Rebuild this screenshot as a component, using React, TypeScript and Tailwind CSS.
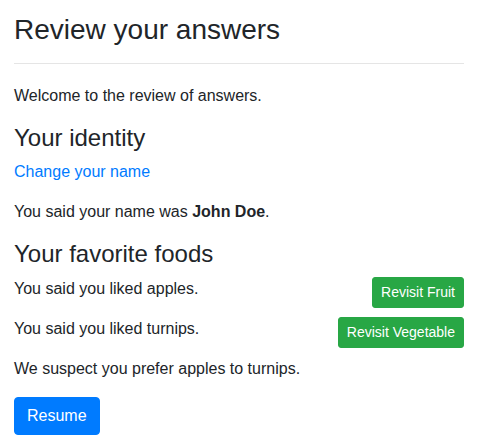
import React from 'react';

const font = { fontFamily: '"Liberation Sans", Arial, sans-serif' };

const App: React.FC = () => {
  return (
    <div className="px-[14px] pt-[13px] text-base leading-6 text-[#212529] bg-white" style={font}>
      <h3 className="text-[28px] leading-[1.2] font-normal">Review your answers</h3>
      <hr className="mt-4 mb-5 border-0 border-t border-black/10" />

      <p className="mb-4">Welcome to the review of answers.</p>

      {/* Identity section */}
      <h4 className="text-2xl leading-[1.2] font-normal mb-2">Your identity</h4>
      <p className="mb-4">
        <a href="#" className="text-[#007bff] no-underline">Change your name</a>
      </p>
      <p className="mb-4">
        You said your name was <b className="font-bold">John Doe</b>.
      </p>

      {/* Foods section */}
      <h4 className="text-2xl leading-[1.2] font-normal mb-2">Your favorite foods</h4>
      <p className="mb-4">
        <button className="float-right bg-[#28a745] border border-[#28a745] text-white text-sm leading-[1.5] px-2 py-1 rounded-[3px]">
          Revisit Fruit
        </button>
        You said you liked apples.
      </p>
      <p className="mb-4">
        <button className="float-right bg-[#28a745] border border-[#28a745] text-white text-sm leading-[1.5] px-2 py-1 rounded-[3px]">
          Revisit Vegetable
        </button>
        You said you liked turnips.
      </p>
      <p className="mb-4">We suspect you prefer apples to turnips.</p>

      <button className="bg-[#007bff] border border-[#007bff] text-white text-base leading-6 px-3 py-1.5 rounded">
        Resume
      </button>
    </div>
  );
};

export default App;
